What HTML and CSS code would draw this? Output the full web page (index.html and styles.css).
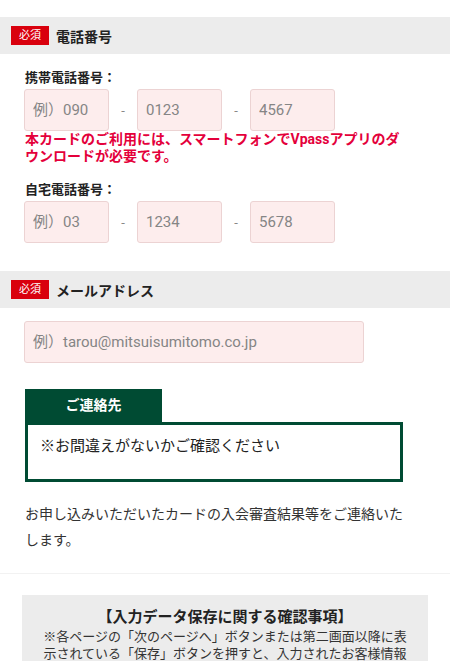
FILE: index.html
```html
<!DOCTYPE html>
<html lang="ja">
<head>
    <meta charset="UTF-8">
    <meta name="viewport" content="width=device-width, initial-scale=1.0">
    <title>お客様情報入力</title>
    <link rel="stylesheet" href="styles.css">
</head>
<body>
    <div class="page">
        <!-- 電話番号 -->
        <section class="group">
            <h2 class="group-head"><span class="badge">必須</span>電話番号</h2>
            <div class="group-body">
                <p class="label">携帯電話番号：</p>
                <div class="tel-row">
                    <input type="tel" class="field tel" placeholder="例）090">
                    <span class="dash">-</span>
                    <input type="tel" class="field tel" placeholder="0123">
                    <span class="dash">-</span>
                    <input type="tel" class="field tel" placeholder="4567">
                </div>
                <p class="notice">本カードのご利用には、スマートフォンでVpassアプリのダウンロードが必要です。</p>

                <p class="label label-home">自宅電話番号：</p>
                <div class="tel-row">
                    <input type="tel" class="field tel" placeholder="例）03">
                    <span class="dash">-</span>
                    <input type="tel" class="field tel" placeholder="1234">
                    <span class="dash">-</span>
                    <input type="tel" class="field tel" placeholder="5678">
                </div>
            </div>
        </section>

        <!-- メールアドレス -->
        <section class="group group-mail">
            <h2 class="group-head"><span class="badge">必須</span>メールアドレス</h2>
            <div class="group-body">
                <input type="email" class="field mail" placeholder="例）tarou@mitsuisumitomo.co.jp">
            </div>
        </section>

        <!-- ご連絡先 -->
        <section class="contact">
            <div class="contact-tab">ご連絡先</div>
            <div class="contact-box">※お間違えがないかご確認ください</div>
            <p class="contact-text">お申し込みいただいたカードの入会審査結果等をご連絡いたします。</p>
        </section>

        <!-- 保存に関する確認事項 -->
        <section class="save-note">
            <h3 class="save-title">【入力データ保存に関する確認事項】</h3>
            <p class="save-text">※各ページの「次のページへ」ボタンまたは第二画面以降に表示されている「保存」ボタンを押すと、入力されたお客様情報が保存されます。</p>
        </section>
    </div>
</body>
</html>
```

FILE: styles.css
```css
body {
    margin: 0;
    padding: 0;
    background-color: #fff;
    font-family: Roboto, "Noto Sans CJK JP", sans-serif;
    color: #222;
}
.page {
    padding-top: 17px;
}
p, h2, h3 {
    margin: 0;
}
.group-head {
    display: flex;
    align-items: center;
    height: 37px;
    padding-left: 11px;
    background-color: #ececec;
    font-size: 14px;
    font-weight: bold;
    color: #222;
}
.badge {
    display: inline-block;
    width: 38px;
    height: 19px;
    margin-right: 7px;
    background-color: #d9000d;
    color: #fff;
    font-size: 11px;
    font-weight: normal;
    line-height: 19px;
    text-align: center;
}
.group-body {
    padding: 14px 0 0 24px;
}
.label {
    font-size: 13px;
    font-weight: bold;
    line-height: 19px;
    margin: 0 0 2px 1px;
}
.label-home {
    margin-top: 15px;
}
.tel-row {
    display: flex;
    align-items: center;
}
.field {
    box-sizing: border-box;
    height: 42px;
    padding: 0 8px;
    border: 1px solid #ecd3d3;
    border-radius: 3px;
    background-color: #fdeded;
    font-family: Roboto, "Noto Sans CJK JP", sans-serif;
    font-size: 15px;
    color: #333;
}
.field::placeholder {
    color: #858585;
}
.tel {
    width: 85px;
}
.dash {
    width: 28px;
    text-align: center;
    font-size: 13px;
    color: #888;
}
.notice {
    width: 383px;
    margin-left: 1px;
    font-size: 14px;
    font-weight: bold;
    line-height: 17px;
    color: #e4003b;
}
.group-mail {
    margin-top: 28px;
}
.group-mail .group-body {
    padding-top: 13px;
}
.mail {
    width: 340px;
}
.contact {
    margin-top: 26px;
    padding: 0 0 20px 25px;
    border-bottom: 1px solid #f2f2f2;
}
.contact-tab {
    width: 137px;
    height: 33px;
    background-color: #004b33;
    color: #fff;
    font-size: 14px;
    font-weight: bold;
    line-height: 33px;
    text-align: center;
}
.contact-box {
    box-sizing: border-box;
    width: 378px;
    height: 60px;
    padding: 10px 12px 0;
    border: 3px solid #004b33;
    font-size: 15px;
    line-height: 22px;
    color: #222;
}
.contact-text {
    width: 383px;
    margin-top: 19px;
    font-size: 14px;
    line-height: 26px;
    color: #333;
}
.save-note {
    margin: 21px 22px 0;
    padding: 11px 17px 10px;
    background-color: #ececec;
    text-align: center;
}
.save-title {
    font-size: 15px;
    font-weight: bold;
    line-height: 22px;
    color: #222;
}
.save-text {
    font-size: 13px;
    line-height: 17px;
    color: #333;
}
```
